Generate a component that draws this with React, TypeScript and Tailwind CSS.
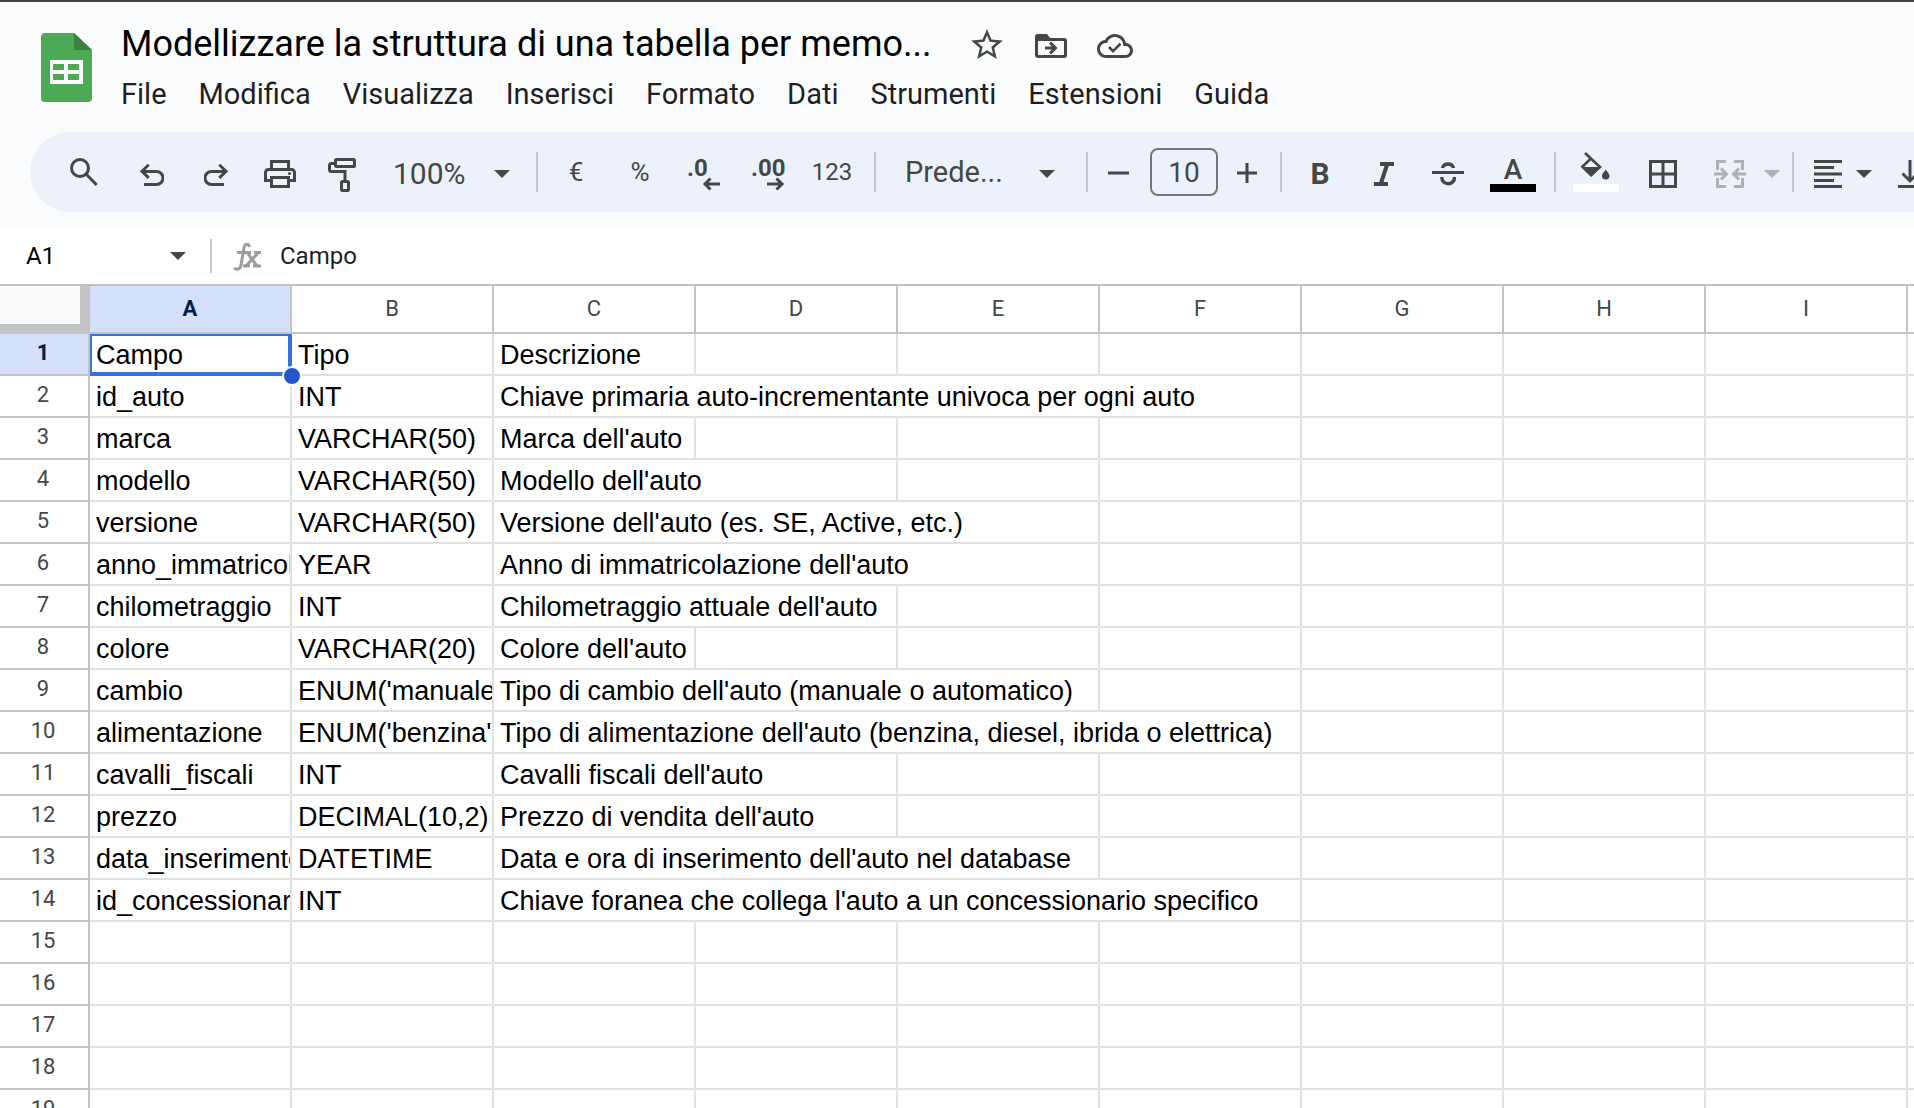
import React from "react";

const INK = "#444746";
const MUTED = "#aeb1b5";

type IconProps = { w: number; h?: number; color?: string; children: React.ReactNode };
const Icon = ({ w, h = 40, color = INK, children }: IconProps) => (
  <svg width={w} height={h} viewBox={`0 0 ${w} ${h}`} fill="none" stroke={color} strokeWidth={3} aria-hidden="true" className="shrink-0">
    {children}
  </svg>
);

type ToolProps = { label: string; className?: string; children: React.ReactNode };
const Tool = ({ label, className = "w-16", children }: ToolProps) => (
  <button type="button" aria-label={label} title={label} className={`flex h-full shrink-0 items-center justify-center text-[#444746] ${className}`}>
    {children}
  </button>
);

const Divider = ({ className = "" }: { className?: string }) => (
  <div className={`h-10 w-[2px] shrink-0 bg-[#c7c7c7] ${className}`} />
);

const Caret = ({ muted = false }: { muted?: boolean }) => (
  <svg width="16" height="8" viewBox="0 0 16 8" fill={muted ? MUTED : INK} aria-hidden="true" className="shrink-0">
    <path d="M0 0h16L8 8z" />
  </svg>
);

const menus = ["File", "Modifica", "Visualizza", "Inserisci", "Formato", "Dati", "Strumenti", "Estensioni", "Guida"];

const columns = ["A", "B", "C", "D", "E", "F", "G", "H", "I", "J"];

type Row = { a: string; b: string; c: string; span: number };
const row = (a: string, b: string, c: string, span: number): Row => ({ a, b, c, span });

/* span: number of columns that the description runs across */
const filledRows: Row[] = [
  row("Campo", "Tipo", "Descrizione", 1),
  row("id_auto", "INT", "Chiave primaria auto-incrementante univoca per ogni auto", 4),
  row("marca", "VARCHAR(50)", "Marca dell'auto", 1),
  row("modello", "VARCHAR(50)", "Modello dell'auto", 2),
  row("versione", "VARCHAR(50)", "Versione dell'auto (es. SE, Active, etc.)", 3),
  row("anno_immatricola", "YEAR", "Anno di immatricolazione dell'auto", 3),
  row("chilometraggio", "INT", "Chilometraggio attuale dell'auto", 2),
  row("colore", "VARCHAR(20)", "Colore dell'auto", 1),
  row("cambio", "ENUM('manuale'", "Tipo di cambio dell'auto (manuale o automatico)", 3),
  row("alimentazione", "ENUM('benzina',", "Tipo di alimentazione dell'auto (benzina, diesel, ibrida o elettrica)", 4),
  row("cavalli_fiscali", "INT", "Cavalli fiscali dell'auto", 2),
  row("prezzo", "DECIMAL(10,2)", "Prezzo di vendita dell'auto", 2),
  row("data_inserimento", "DATETIME", "Data e ora di inserimento dell'auto nel database", 3),
  row("id_concessionario", "INT", "Chiave foranea che collega l'auto a un concessionario specifico", 4),
];
const emptyRows: Row[] = Array.from({ length: 6 }, () => row("", "", "", 1));
const rows = [...filledRows, ...emptyRows];

function Header() {
  return (
    <header className="flex h-[132px] shrink-0 items-start border-t-2 border-[#444441] pl-[41px]">
      <svg width="51" height="69" viewBox="0 0 51 69" className="mt-[31px] shrink-0" role="img" aria-label="Fogli">
        <path d="M4 0H33L51 17V65a4 4 0 0 1-4 4H4a4 4 0 0 1-4-4V4a4 4 0 0 1 4-4z" fill="#4caa54" />
        <path d="M33 0L51 17H33z" fill="#39823c" />
        <path fillRule="evenodd" d="M9 27h33v24H9zM12 31v6h11v-6zM27 31v6h11v-6zM12 41v6h11v-6zM27 41v6h11v-6z" fill="#fff" />
      </svg>
      <div className="ml-[29px] min-w-0">
        <div className="mt-[18px] flex h-12 items-center">
          <h1 className="whitespace-nowrap text-[36px] leading-[48px] text-black">Modellizzare la struttura di una tabella per memo...</h1>
          <button type="button" aria-label="Aggiungi a Speciali" className="ml-10">
            <svg width="32" height="30" viewBox="2 2 20 19" fill={INK} aria-hidden="true">
              <path d="M22 9.240l-7.190-.620L12 2 9.190 8.630 2 9.240l5.460 4.730L5.820 21 12 17.270 18.180 21l-1.630-7.030L22 9.240zM12 15.400l-3.760 2.270 1-4.280-3.320-2.880 4.380-.380L12 6.100l1.710 4.040 4.380.380-3.320 2.880 1 4.280L12 15.400z" />
            </svg>
          </button>
          <button type="button" aria-label="Sposta" className="ml-8 pt-1">
            <Icon w={32} h={24}>
              <path d="M1.500 4V21a1.500 1.500 0 0 0 1.500 1.500H29a1.500 1.500 0 0 0 1.500-1.500V7A1.500 1.500 0 0 0 29 5.500H3" />
              <path d="M0 7V3a3 3 0 0 1 3-3h9l3 4v3z" fill={INK} stroke="none" />
              <path d="M10 14H20M15 8.500L20.500 14 15 19.500" />
            </Icon>
          </button>
          <button type="button" aria-label="Stato del documento" className="ml-[30px] pt-1">
            <svg width="36" height="24" viewBox="0 4 24 16" fill={INK} aria-hidden="true">
              <path d="M19.350 10.040C18.670 6.590 15.640 4 12 4 9.110 4 6.600 5.640 5.350 8.040 2.340 8.360 0 10.910 0 14c0 3.310 2.690 6 6 6h13c2.760 0 5-2.240 5-5 0-2.640-2.050-4.780-4.650-4.960zM19 18H6c-2.210 0-4-1.790-4-4s1.790-4 4-4h.710C7.370 7.690 9.480 6 12 6c3.040 0 5.500 2.460 5.500 5.500v.500H19c1.660 0 3 1.340 3 3s-1.340 3-3 3z" />
              <path d="M8 12.700l2.700 2.700 5-5" fill="none" stroke={INK} strokeWidth="1.800" />
            </svg>
          </button>
        </div>
        <nav className="flex h-[52px] items-center gap-8">
          {menus.map((m) => (
            <button key={m} type="button" className="whitespace-nowrap text-[29px] leading-9 text-[#1f1f1f]">{m}</button>
          ))}
        </nav>
      </div>
    </header>
  );
}

function Toolbar() {
  return (
    <div role="toolbar" aria-label="Principale" className="ml-[30px] flex h-20 shrink-0 items-center overflow-hidden rounded-l-full bg-[#edf2fa] pl-[22px] text-[#444746]">
      <Tool label="Cerca nei menu" className="mr-1 w-16">
        <Icon w={28}><circle cx="10" cy="16" r="8.500" /><path d="M16 22l10.700 11" /></Icon>
      </Tool>
      <Tool label="Annulla"><Icon w={24}><path d="M8.700 12.700L2 19.300l6.700 6.500M2 19.500h14.500a6.500 6.500 0 0 1 0 13H4" /></Icon></Tool>
      <Tool label="Ripeti"><Icon w={24}><path d="M15.300 12.700L22 19.300l-6.700 6.500M22 19.500H7.500a6.500 6.500 0 0 0 0 13H20" /></Icon></Tool>
      <Tool label="Stampa">
        <Icon w={32}>
          <path d="M7.500 17.500V9.500h17v8M7.500 28.500h-6v-8a3 3 0 0 1 3-3h23a3 3 0 0 1 3 3v8h-6" />
          <path d="M7.500 25.500h17v9h-17z" />
          <circle cx="25.500" cy="21.500" r="1.500" fill={INK} stroke="none" />
        </Icon>
      </Tool>
      <Tool label="Copia formattazione" className="w-[60px]">
        <Icon w={28}>
          <rect x="7.500" y="7.500" width="19" height="7" rx="1" />
          <path d="M7.500 11.500h-4a2 2 0 0 0-2 2v4a2 2 0 0 0 2 2H17v10" />
          <rect x="13.500" y="29.500" width="7" height="9" rx="1" />
        </Icon>
      </Tool>
      <div className="relative flex h-full w-[164px] shrink-0 items-center">
        <select aria-label="Zoom" defaultValue="100%" className="w-full appearance-none bg-transparent pl-[21px] pt-1 text-[30px] leading-9">
          <option>100%</option>
        </select>
        <span className="pointer-events-none absolute right-[26px] pt-1"><Caret /></span>
      </div>
      <Divider className="mr-[6px]" />
      <Tool label="Formato valuta"><span className="text-[26px]">€</span></Tool>
      <Tool label="Formato percentuale"><span className="text-[26px]">%</span></Tool>
      <Tool label="Riduci decimali">
        <Icon w={34}>
          <text x="0" y="24" fill={INK} stroke="none" className="text-[24px] font-bold">.0</text>
          <path d="M18 32h15M23.500 26.500L18 32l5.500 5.500" />
        </Icon>
      </Tool>
      <Tool label="Aumenta decimali">
        <Icon w={34}>
          <text x="0" y="24" fill={INK} stroke="none" className="text-[24px] font-bold">.00</text>
          <path d="M16 32h15M25.500 26.500L31 32l-5.500 5.500" />
        </Icon>
      </Tool>
      <Tool label="Altri formati"><span className="text-2xl">123</span></Tool>
      <Divider className="ml-[10px]" />
      <div className="relative flex h-full w-[210px] shrink-0 items-center">
        <select aria-label="Carattere" defaultValue="Prede..." className="w-full appearance-none bg-transparent pl-[29px] text-[29px] leading-9">
          <option>Prede...</option>
        </select>
        <span className="pointer-events-none absolute right-[31px] pt-1"><Caret /></span>
      </div>
      <Divider />
      <Tool label="Riduci dimensione" className="w-[62px]"><Icon w={22}><path d="M0 21h21" /></Icon></Tool>
      <input type="text" aria-label="Dimensione carattere" defaultValue="10" className="h-12 w-[68px] shrink-0 rounded-lg border-2 border-[#747775] bg-transparent text-center text-[28px]" />
      <Tool label="Aumenta dimensione" className="mr-1 w-[58px]"><Icon w={20}><path d="M0 21h20M10 11v20" /></Icon></Tool>
      <Divider className="mr-[6px]" />
      <Tool label="Grassetto"><span className="pt-[2px] text-[30px] font-bold">B</span></Tool>
      <Tool label="Corsivo"><Icon w={20}><path strokeWidth="4" d="M6 12h14M0 32h14M13.300 12l-6.600 20" /></Icon></Tool>
      <Tool label="Barrato">
        <Icon w={32}><path d="M0 20.500h32" /><path strokeWidth="3.500" d="M10.500 16c1-5.500 10-5.500 11 0M9.800 25c0 9 13 9 12.700 0" /></Icon>
      </Tool>
      <Tool label="Colore testo" className="w-[66px]">
        <Icon w={46}>
          <text x="23" y="27" textAnchor="middle" fill={INK} stroke="none" className="text-[28px] font-medium">A</text>
          <path d="M0 32h46v8H0z" fill="#000" stroke="none" />
        </Icon>
      </Tool>
      <Divider className="ml-2 mr-[6px]" />
      <Tool label="Colore riempimento" className="w-[68px]">
        <Icon w={46}>
          <path strokeWidth="2.600" d="M12 1l15 14-9 8-8.500-8.500 8.500-8" />
          <path d="M8 15h20L18.300 25z" fill={INK} stroke="none" />
          <path d="M32.700 17.500c2 3 3.800 4.500 3.800 6.200a3.800 3.800 0 0 1-7.600 0c0-1.700 1.800-3.200 3.800-6.200z" fill={INK} stroke="none" />
          <path d="M0 32h46v8H0z" fill="#fff" stroke="none" />
        </Icon>
      </Tool>
      <Tool label="Bordi" className="w-[66px]"><Icon w={28}><path d="M1.500 9.500h25v25h-25zM14 9.500v25M1.500 22h25" /></Icon></Tool>
      <Tool label="Unisci celle" className="w-[68px]">
        <Icon w={32} color={MUTED}>
          <path d="M3.500 18V9.500H12M20 9.500h8.500V18M3.500 26v8.500H12M20 34.500h8.500V26" />
          <path d="M0 22h12M7 16.500l5.500 5.500L7 27.500M32 22H20M25 16.500L19.500 22l5.500 5.500" />
        </Icon>
      </Tool>
      <Tool label="Tipo di unione" className="mr-3 pt-1"><Caret muted /></Tool>
      <Divider className="mr-[6px]" />
      <Tool label="Allineamento orizzontale" className="w-[84px] gap-[14px] pl-[2px]">
        <Icon w={28}><path d="M0 9.500h28M0 15.500h20M0 22h28M0 28.500h20M0 34.500h28" /></Icon>
        <span className="pt-1"><Caret /></span>
      </Tool>
      <Tool label="Allineamento verticale" className="ml-3 w-7"><Icon w={24}><path d="M12 8v21M4.500 21.500L12 29l7.500-7.500M0 34.500h24" /></Icon></Tool>
    </div>
  );
}

function FormulaBar() {
  return (
    <div className="mt-4 flex h-14 shrink-0 items-center bg-white">
      <input type="text" aria-label="Casella nome" defaultValue="A1" className="ml-[26px] w-36 bg-transparent text-2xl text-black" />
      <button type="button" aria-label="Intervalli denominati" className="mr-6"><Caret /></button>
      <div className="h-[34px] w-[2px] bg-[#c7c7c7]" />
      <span className="ml-[21px] mr-[19px] pt-[2px]">
        <Icon w={28} h={28} color="#9c9c9c">
          <path d="M16.500 4C15.500 0 11.800.5 11 5L8 22c-.800 4.500-5.500 5.500-6.500 2.500" />
          <path d="M4 9.500h14M21 9.500h7M10 23h7M20 23h8" />
          <path d="M14.500 10l9.500 13M25 10L13 23" />
        </Icon>
      </span>
      <input type="text" aria-label="Barra della formula" defaultValue="Campo" className="min-w-0 flex-1 bg-transparent text-2xl text-[#1f1f1f]" />
    </div>
  );
}

function Cell({ children, clip = false, open = false, selected = false }: { children?: React.ReactNode; clip?: boolean; open?: boolean; selected?: boolean }) {
  return (
    <td className={`relative h-[42px] border-b-2 border-[#e1e1e1] p-0 ${open ? "" : "border-r-2"}`}>
      <div className={`h-10 whitespace-nowrap pl-[6px] leading-[42px] ${clip ? "overflow-hidden" : ""}`}>{children}</div>
      {selected && (
        <div className="pointer-events-none absolute -bottom-[2px] -right-[2px] left-0 top-0 z-10 border-2 border-b-4 border-r-4 border-[#3871e0]">
          <span className="absolute -bottom-[14px] -right-[14px] size-5 rounded-full border-2 border-white bg-[#2555c9]" />
        </div>
      )}
    </td>
  );
}

function Grid() {
  return (
    <main className="min-h-0 flex-1 overflow-hidden border-t-2 border-[#c0c0c0] bg-white">
      <table className="w-[2110px] table-fixed border-separate border-spacing-0 font-['Liberation_Sans',Arial,sans-serif] text-[27px] text-black">
        <colgroup>
          <col className="w-[90px]" />
          {columns.map((c) => <col key={c} className="w-[202px]" />)}
        </colgroup>
        <thead className="font-['Roboto',sans-serif] text-[22px] text-[#444746]">
          <tr>
            <th aria-label="Seleziona tutto" className="h-12 border-b-2 border-r-2 border-[#c4c4c4] p-0">
              <div className="h-[46px] border-b-8 border-r-8 border-[#c4c4c4] bg-[#f8f9fa]" />
            </th>
            {columns.map((c, i) => (
              <th key={c} scope="col" className={`h-12 border-b-2 border-r-2 border-[#c4c4c4] p-0 leading-[46px] ${i === 0 ? "bg-[#d5e0fb] font-bold text-[#041e49]" : "font-normal"}`}>{c}</th>
            ))}
          </tr>
        </thead>
        <tbody>
          {rows.map((r, i) => (
            <tr key={i}>
              <th scope="row" className={`h-[42px] border-b-2 border-r-2 border-[#c4c4c4] p-0 pr-[2px] align-top font-['Roboto',sans-serif] text-[22px] leading-[38px] ${i === 0 ? "bg-[#d5e0fb] font-bold text-[#041e49]" : "font-normal text-[#444746]"}`}>{i + 1}</th>
              <Cell clip selected={i === 0}>{r.a}</Cell>
              <Cell clip>{r.b}</Cell>
              <Cell open={r.span > 1}>{r.c}</Cell>
              {columns.slice(3).map((c, k) => <Cell key={c} open={k + 2 < r.span} />)}
            </tr>
          ))}
        </tbody>
      </table>
    </main>
  );
}

export default function App() {
  return (
    <div className="flex h-screen flex-col overflow-hidden bg-[#f9fbfd] font-['Roboto',sans-serif]">
      <Header />
      <Toolbar />
      <FormulaBar />
      <Grid />
    </div>
  );
}
